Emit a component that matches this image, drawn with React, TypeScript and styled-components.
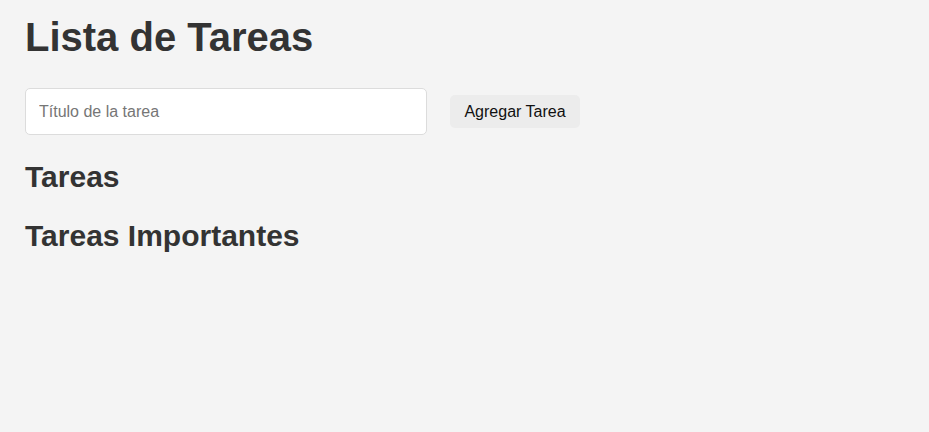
import React from 'react';
import styled, { createGlobalStyle } from 'styled-components';

const GlobalStyle = createGlobalStyle`
  html, body {
    margin: 0;
    padding: 0;
    background: #f4f4f4;
  }
  body {
    font-family: "Liberation Sans", Arial, sans-serif;
    color: #333;
  }
`;

const Page = styled.main`
  min-height: 432px;
  box-sizing: border-box;
  padding: 15px 25px;
`;

const Title = styled.h1`
  font-size: 40px;
  font-weight: 700;
  line-height: normal;
  margin: 0 0 28px;
`;

const TaskForm = styled.form`
  display: flex;
  align-items: center;
  gap: 23px;
  margin-bottom: 25px;
`;

const TaskInput = styled.input`
  width: 402px;
  height: 47px;
  box-sizing: border-box;
  padding: 0 13px;
  border: 1px solid #dcdcdc;
  border-radius: 5px;
  background: #fff;
  font-family: inherit;
  font-size: 16px;
  color: #333;

  &::placeholder {
    color: #767676;
  }
`;

const AddButton = styled.button`
  width: 130px;
  height: 33px;
  padding: 0;
  border: none;
  border-radius: 5px;
  background: #ececec;
  color: #111;
  font-family: inherit;
  font-size: 16px;
  cursor: pointer;
`;

const SectionTitle = styled.h2`
  font-size: 30px;
  font-weight: 700;
  line-height: normal;
  margin: 0 0 25px;
`;

const App: React.FC = () => (
  <>
    <GlobalStyle />
    <Page>
      <Title>Lista de Tareas</Title>
      <TaskForm onSubmit={e => e.preventDefault()}>
        <TaskInput type="text" placeholder="Título de la tarea" />
        <AddButton type="submit">Agregar Tarea</AddButton>
      </TaskForm>
      <SectionTitle>Tareas</SectionTitle>
      <SectionTitle>Tareas Importantes</SectionTitle>
    </Page>
  </>
);

export default App;
